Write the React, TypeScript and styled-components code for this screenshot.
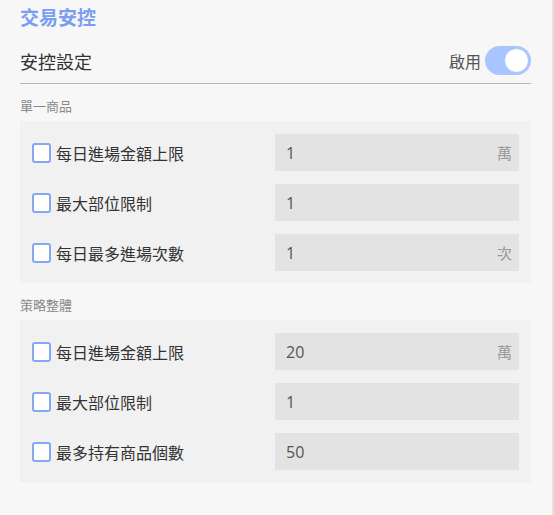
import React from "react";
import styled, { createGlobalStyle } from "styled-components";

const Global = createGlobalStyle`
  html, body { margin: 0; padding: 0; background: #f7f7f7; }
  body { font-family: "Open Sans", "Noto Sans CJK TC", sans-serif; }
  * { box-sizing: border-box; }
`;

const Panel = styled.div`
  width: 554px;
  height: 515px;
  background: #f7f7f7;
  border-right: 2px solid #e3e3e3;
  padding: 0 21px 0 20px;
  width: 554px;
`;

const Title = styled.div`
  font-family: "Noto Sans CJK TC", sans-serif;
  font-size: 19px;
  font-weight: 700;
  color: #7a9ef0;
  line-height: 26px;
  padding-top: 4px;
`;

const HeaderRow = styled.div`
  display: flex;
  align-items: center;
  justify-content: space-between;
  margin-top: 14px;
  height: 40px;
  padding-bottom: 6px;
  border-bottom: 1.5px solid #b8b8b8;
`;

const HeaderText = styled.div`
  font-family: "Noto Sans CJK TC", sans-serif;
  font-size: 18px;
  color: #333;
`;

const ToggleWrap = styled.div`
  display: flex;
  align-items: center;
  gap: 4px;
`;

const ToggleLabel = styled.span`
  font-family: "Noto Sans CJK TC", sans-serif;
  font-size: 16px;
  color: #555;
`;

const Track = styled.div<{ $on: boolean }>`
  width: 46px;
  height: 29px;
  border-radius: 15px;
  background: ${(p) => (p.$on ? "#a9c5ff" : "#ccc")};
  display: flex;
  align-items: center;
  justify-content: ${(p) => (p.$on ? "flex-end" : "flex-start")};
  padding: 2px;
`;

const Knob = styled.div`
  width: 25px;
  height: 25px;
  border-radius: 50%;
  background: #fff;
  border: 1.5px solid #a9c5ff;
`;

const SectionLabel = styled.div`
  font-family: "Noto Sans CJK TC", sans-serif;
  font-size: 13px;
  color: #888;
  line-height: 18px;
  margin-top: 13px;
  margin-bottom: 6px;
`;

const Box = styled.div`
  background: #f1f1f1;
  padding: 13px 12px 12px 12px;
  display: flex;
  flex-direction: column;
  gap: 13px;
`;

const Row = styled.div`
  display: flex;
  align-items: center;
  justify-content: space-between;
  height: 37px;
`;

const CheckLabel = styled.label`
  display: flex;
  align-items: center;
  gap: 5px;
  font-family: "Noto Sans CJK TC", sans-serif;
  font-size: 16px;
  color: #333;
`;

const Check = styled.span`
  width: 19px;
  height: 20px;
  border: 2px solid #86a8f2;
  border-radius: 3px;
  background: #fff;
  display: inline-block;
`;

const Field = styled.div`
  width: 244px;
  height: 37px;
  background: #e3e3e3;
  display: flex;
  align-items: center;
  justify-content: space-between;
  padding: 0 7px 0 11px;
`;

const Value = styled.span`
  font-family: "Open Sans", sans-serif;
  font-size: 16px;
  color: #555;
`;

const Unit = styled.span`
  font-family: "Noto Sans CJK TC", sans-serif;
  font-size: 15px;
  color: #999;
`;

type Item = { label: string; value: string; unit?: string };

const single: Item[] = [
  { label: "每日進場金額上限", value: "1", unit: "萬" },
  { label: "最大部位限制", value: "1" },
  { label: "每日最多進場次數", value: "1", unit: "次" },
];

const strategy: Item[] = [
  { label: "每日進場金額上限", value: "20", unit: "萬" },
  { label: "最大部位限制", value: "1" },
  { label: "最多持有商品個數", value: "50" },
];

const Section = ({ title, items }: { title: string; items: Item[] }) => (
  <>
    <SectionLabel>{title}</SectionLabel>
    <Box>
      {items.map((it) => (
        <Row key={it.label}>
          <CheckLabel>
            <Check />
            {it.label}
          </CheckLabel>
          <Field>
            <Value>{it.value}</Value>
            {it.unit && <Unit>{it.unit}</Unit>}
          </Field>
        </Row>
      ))}
    </Box>
  </>
);

export default function App() {
  return (
    <>
      <Global />
      <Panel>
        <Title>交易安控</Title>
        <HeaderRow>
          <HeaderText>安控設定</HeaderText>
          <ToggleWrap>
            <ToggleLabel>啟用</ToggleLabel>
            <Track $on>
              <Knob />
            </Track>
          </ToggleWrap>
        </HeaderRow>
        <Section title="單一商品" items={single} />
        <Section title="策略整體" items={strategy} />
      </Panel>
    </>
  );
}
